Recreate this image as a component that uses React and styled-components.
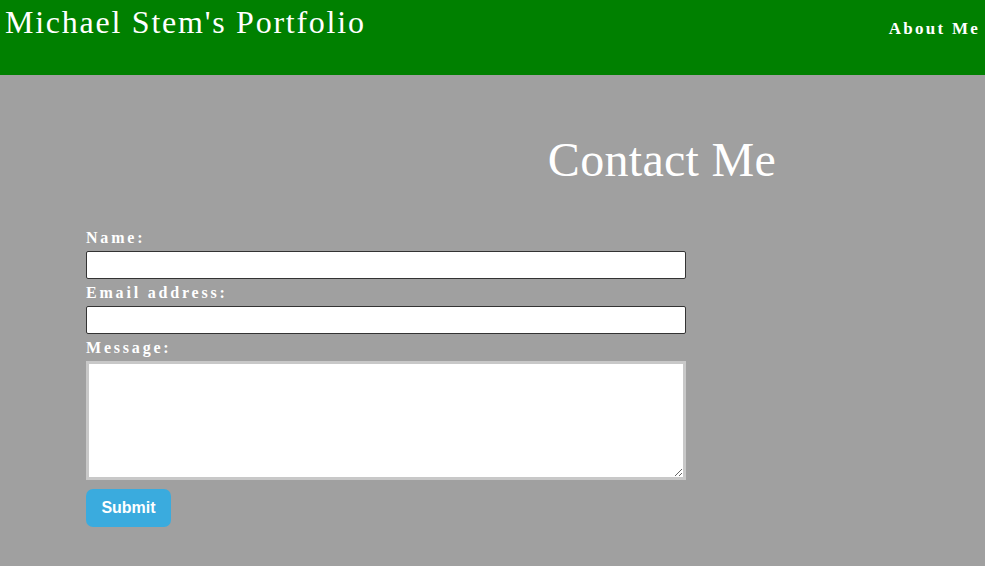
import React from "react";
import styled, { createGlobalStyle } from "styled-components";

const Global = createGlobalStyle`
  html, body { margin: 0; padding: 0; }
  body {
    background: #a0a0a0;
    font-family: "Liberation Serif", "Times New Roman", serif;
    color: #fff;
    min-height: 566px;
  }
  * { box-sizing: border-box; }
`;

const Header = styled.header`
  height: 75px;
  background: #008000;
  display: flex;
  justify-content: space-between;
  align-items: flex-start;
  padding: 0 5px;
`;

const Title = styled.h1`
  margin: 4px 0 0 0;
  font-size: 32px;
  font-weight: normal;
  letter-spacing: 1.75px;
  color: #fff;
`;

const NavLink = styled.a`
  margin-top: 19px;
  font-size: 17px;
  font-weight: bold;
  letter-spacing: 2.25px;
  color: #fff;
  text-decoration: none;
`;

const Main = styled.main`
  padding: 57px 0 40px 86px;
`;

const Heading = styled.h2`
  margin: 0 0 41px 253px;
  text-align: center;
  font-size: 48px;
  font-weight: normal;
  letter-spacing: 0.3px;
  color: #fff;
  width: 646px;
`;

const Form = styled.form`
  display: flex;
  flex-direction: column;
  align-items: flex-start;
  gap: 4px;
  width: 600px;
`;

const Label = styled.label`
  display: block;
  font-size: 16px;
  line-height: 19px;
  font-weight: bold;
  letter-spacing: 2.8px;
  color: #fff;
`;

const Input = styled.input`
  width: 600px;
  height: 28px;
  border: 1px solid #333;
  border-radius: 2px;
  background: #fff;
`;

const TextArea = styled.textarea`
  width: 600px;
  height: 119px;
  border: 3px solid #c8c8c8;
  background: #fff;
  margin-bottom: 5px;
`;

const Button = styled.button`
  width: 85px;
  height: 38px;
  border: none;
  border-radius: 7px;
  background: #3aabde;
  color: #fff;
  font-family: "Liberation Sans", Arial, sans-serif;
  font-weight: bold;
  font-size: 16px;
`;

export default function App() {
  return (
    <>
      <Global />
      <Header>
        <Title>Michael Stem's Portfolio</Title>
        <NavLink href="#">About Me</NavLink>
      </Header>
      <Main>
        <Heading>Contact Me</Heading>
        <Form onSubmit={(e) => e.preventDefault()}>
          <Label htmlFor="name">Name:</Label>
          <Input id="name" type="text" />
          <Label htmlFor="email">Email address:</Label>
          <Input id="email" type="email" />
          <Label htmlFor="msg">Message:</Label>
          <TextArea id="msg" />
          <Button type="submit">Submit</Button>
        </Form>
      </Main>
    </>
  );
}
